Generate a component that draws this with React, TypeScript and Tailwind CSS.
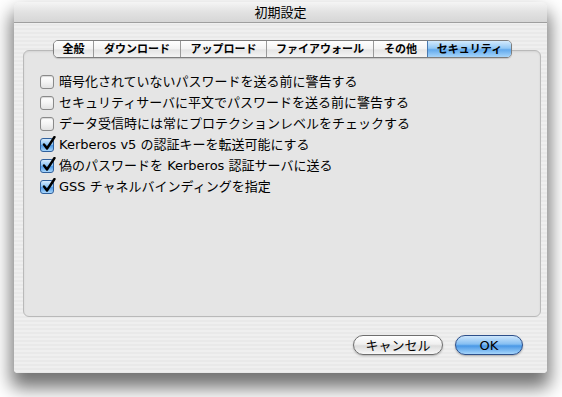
import React from 'react'

const tabs = ['全般', 'ダウンロード', 'アップロード', 'ファイアウォール', 'その他', 'セキュリティ']
const tabWidths = ['w-[39px]', 'w-[87px]', 'w-[86px]', 'w-[107px]', 'w-[54px]', 'w-[84px]']

const options = [
  { label: '暗号化されていないパスワードを送る前に警告する', checked: false },
  { label: 'セキュリティサーバに平文でパスワードを送る前に警告する', checked: false },
  { label: 'データ受信時には常にプロテクションレベルをチェックする', checked: false },
  { label: 'Kerberos v5 の認証キーを転送可能にする', checked: true },
  { label: '偽のパスワードを Kerberos 認証サーバに送る', checked: true },
  { label: 'GSS チャネルバインディングを指定', checked: true },
]

function CheckBox({ checked }: { checked: boolean }) {
  if (!checked) {
    return (
      <span className="relative h-[14px] w-[14px] shrink-0 rounded-[3px] border border-[#8a8a8a] bg-[linear-gradient(to_bottom,#ffffff,#f4f4f4_50%,#e2e2e2)] shadow-[inset_0_1px_1px_rgba(0,0,0,0.15)]" />
    )
  }
  return (
    <span className="relative h-[14px] w-[14px] shrink-0 rounded-[3px] border border-[#30609c] bg-[linear-gradient(to_bottom,#d6ebfd,#8cc3f3_45%,#4f9ae6_55%,#a8d6fb)]">
      <svg className="absolute -top-[3px] left-[1px]" width="14" height="15" viewBox="0 0 14 15">
        <path d="M2 8.5 L5 12.5 L12.5 1" fill="none" stroke="#000" strokeWidth="2.4" strokeLinecap="round" strokeLinejoin="round" />
      </svg>
    </span>
  )
}

export default function App() {
  return (
    <div
      className="h-[397px] w-[562px] overflow-hidden bg-white pl-[14px] pt-[2px] text-black"
      style={{ fontFamily: '"DejaVu Sans", "Noto Sans CJK JP", sans-serif' }}
    >
      <div className="flex h-[371px] w-[533px] flex-col rounded-t-[6px] rounded-b-[4px] bg-[repeating-linear-gradient(to_bottom,#efefef_0px,#efefef_2px,#e9e9e9_2px,#e9e9e9_4px)] shadow-[0_12px_18px_3px_rgba(0,0,0,0.55)]">
        {/* title bar */}
        <div className="flex h-[21px] items-center justify-center rounded-t-[6px] border-b border-[#9e9e9e] bg-[linear-gradient(to_bottom,#f5f5f5,#e2e2e2_50%,#d6d6d6)] pt-[1px] text-[13px] leading-none">
          初期設定
        </div>

        <div className="pl-[9px] pr-[6px] pt-[17px]">
          {/* tabs */}
          <div className="relative z-10 flex justify-center pl-[1px]">
            <div className="flex h-[18px] overflow-hidden rounded-[5px] border border-[#7d7d7d] shadow-[0_1px_1px_rgba(0,0,0,0.15)]">
              {tabs.map((t, i) => {
                const active = i === tabs.length - 1
                return (
                  <div
                    key={t}
                    className={`flex items-center justify-center text-[11px] font-bold leading-none ${tabWidths[i]} ${
                      i > 0 ? 'border-l border-[#9a9a9a]' : ''
                    } ${
                      active
                        ? 'border-l-[#4a79b0] bg-[linear-gradient(to_bottom,#d3eafd,#94c9f5_45%,#62a9ec_55%,#a6d5fa)]'
                        : 'bg-[linear-gradient(to_bottom,#ffffff,#f3f3f3_50%,#e4e4e4_55%,#f4f4f4)]'
                    }`}
                  >
                    {t}
                  </div>
                )
              })}
            </div>
          </div>

          {/* group box */}
          <div className="-mt-[8px] flex h-[267px] flex-col rounded-[6px] border border-[#b9b9b9] bg-[#e5e5e5] pl-[16px] pt-[20px] shadow-[inset_0_1px_2px_rgba(0,0,0,0.08)]">
            {options.map((o) => (
              <div key={o.label} className="flex h-[21px] items-center gap-[5px] text-[13px] leading-none">
                <CheckBox checked={o.checked} />
                <span>{o.label}</span>
              </div>
            ))}
          </div>

          {/* buttons */}
          <div className="mt-[18px] flex justify-end gap-[12px] pr-[18px]">
            <button className="flex h-[20px] w-[90px] items-center justify-center rounded-full border border-[#6e6e6e] bg-[linear-gradient(to_bottom,#ffffff,#f0f0f0_45%,#dcdcdc_55%,#f8f8f8)] text-[13px] leading-none shadow-[0_1px_2px_rgba(0,0,0,0.25)]">
              キャンセル
            </button>
            <button className="flex h-[20px] w-[68px] items-center justify-center rounded-full border border-[#2d4f8a] bg-[linear-gradient(to_bottom,#cde6fc,#86bff2_45%,#4a98e6_55%,#a5d5fb)] text-[13px] leading-none shadow-[0_1px_2px_rgba(0,0,0,0.3)]">
              OK
            </button>
          </div>
        </div>
      </div>
    </div>
  )
}
